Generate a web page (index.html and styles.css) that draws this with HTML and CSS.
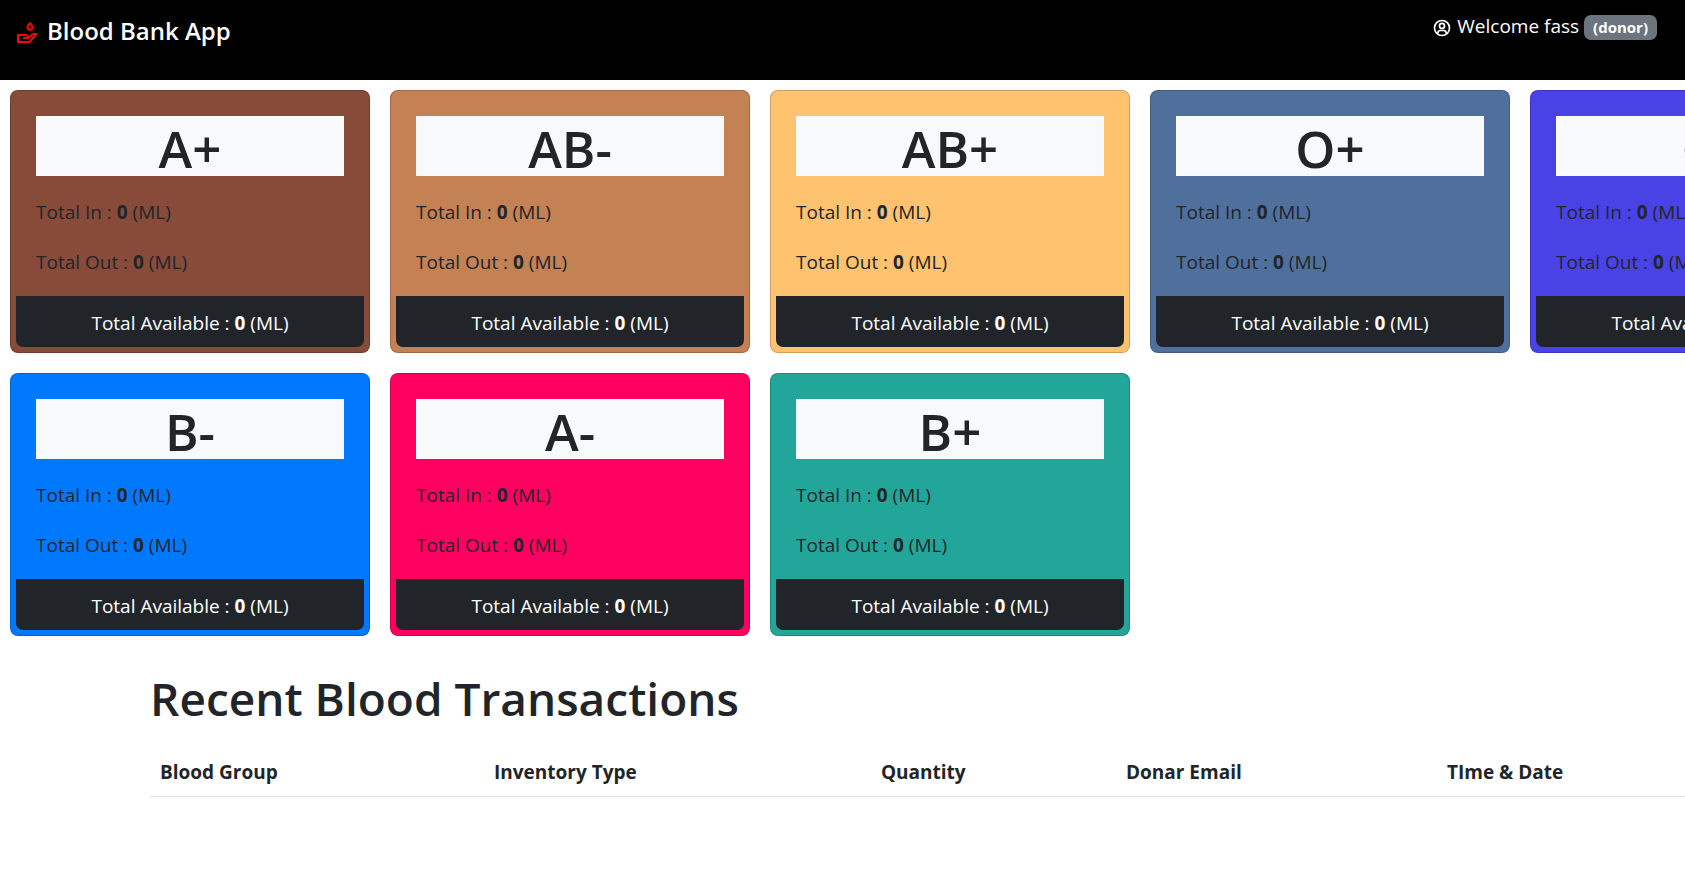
FILE: index.html
```html
<!DOCTYPE html>
<html lang="en">
<head>
<meta charset="utf-8">
<title>Blood Bank App</title>
<link rel="stylesheet" href="styles.css">
</head>
<body>
<header class="navbar">
  <h1 class="brand">
    <svg class="brand-icon" viewBox="0 0 24 24" fill="none" stroke="currentColor" stroke-width="2" stroke-linejoin="round" aria-hidden="true">
      <path d="M15 2c-1 1.500-2.500 2.700-2.500 4.300a2.500 2.500 0 0 0 5 0c0-1.600-1.500-2.800-2.500-4.300z"/>
      <path d="M8 17h5v-.5a2.500 2.500 0 0 0-2.500-2.500H3v7h11.500l6.900-8h-2.600c-.8 0-1.500.3-2.100.9L13 17"/>
    </svg>
    Blood Bank App
  </h1>
  <p class="welcome">
    <svg class="user-icon" viewBox="0 0 24 24" fill="none" stroke="currentColor" stroke-width="2" aria-hidden="true">
      <circle cx="12" cy="12" r="9"/>
      <circle cx="12" cy="9.500" r="3"/>
      <path d="M7 18.500v-.5a3 3 0 0 1 3-3h4a3 3 0 0 1 3 3v.5"/>
    </svg>
    Welcome fass
    <span class="badge">(donor)</span>
  </p>
</header>
<main class="main">
  <section class="cards">
    <article class="card brown">
      <div class="card-body"><h2>A+</h2><p>Total In : <b>0</b> (ML)</p><p>Total Out : <b>0</b> (ML)</p></div>
      <div class="card-footer">Total Available : <b>0</b> (ML)</div>
    </article>
    <article class="card copper">
      <div class="card-body"><h2>AB-</h2><p>Total In : <b>0</b> (ML)</p><p>Total Out : <b>0</b> (ML)</p></div>
      <div class="card-footer">Total Available : <b>0</b> (ML)</div>
    </article>
    <article class="card amber">
      <div class="card-body"><h2>AB+</h2><p>Total In : <b>0</b> (ML)</p><p>Total Out : <b>0</b> (ML)</p></div>
      <div class="card-footer">Total Available : <b>0</b> (ML)</div>
    </article>
    <article class="card steel">
      <div class="card-body"><h2>O+</h2><p>Total In : <b>0</b> (ML)</p><p>Total Out : <b>0</b> (ML)</p></div>
      <div class="card-footer">Total Available : <b>0</b> (ML)</div>
    </article>
    <article class="card indigo">
      <div class="card-body"><h2>O-</h2><p>Total In : <b>0</b> (ML)</p><p>Total Out : <b>0</b> (ML)</p></div>
      <div class="card-footer">Total Available : <b>0</b> (ML)</div>
    </article>
    <article class="card blue">
      <div class="card-body"><h2>B-</h2><p>Total In : <b>0</b> (ML)</p><p>Total Out : <b>0</b> (ML)</p></div>
      <div class="card-footer">Total Available : <b>0</b> (ML)</div>
    </article>
    <article class="card pink">
      <div class="card-body"><h2>A-</h2><p>Total In : <b>0</b> (ML)</p><p>Total Out : <b>0</b> (ML)</p></div>
      <div class="card-footer">Total Available : <b>0</b> (ML)</div>
    </article>
    <article class="card teal">
      <div class="card-body"><h2>B+</h2><p>Total In : <b>0</b> (ML)</p><p>Total Out : <b>0</b> (ML)</p></div>
      <div class="card-footer">Total Available : <b>0</b> (ML)</div>
    </article>
  </section>
  <section class="transactions">
    <h2 id="recent">Recent Blood Transactions</h2>
    <table class="table" aria-labelledby="recent">
      <colgroup><col class="c-group"><col class="c-type"><col class="c-quantity"><col class="c-email"><col class="c-date"></colgroup>
      <thead>
        <tr>
          <th scope="col">Blood Group</th>
          <th scope="col">Inventory Type</th>
          <th scope="col">Quantity</th>
          <th scope="col">Donar Email</th>
          <th scope="col">TIme &amp; Date</th>
        </tr>
      </thead>
      <tbody></tbody>
    </table>
  </section>
</main>
</body>
</html>
```

FILE: styles.css
```css
* {
  box-sizing: border-box;
}

body {
  margin: 0;
  overflow-x: hidden;
  background: #fff;
  color: #212529;
  font: 19px/30px "Segoe UI", "Open Sans", "Noto Sans", sans-serif;
}

h1, h2, p {
  margin: 0;
}

.navbar {
  display: flex;
  justify-content: space-between;
  align-items: flex-start;
  min-height: 80px;
  padding: 11px 28px 11px 15px;
  background: #000;
  color: #fff;
}

.brand {
  display: flex;
  align-items: center;
  gap: 8px;
  font-size: 24px;
  font-weight: 600;
  line-height: 40px;
}

.brand-icon {
  width: 24px;
  height: 24px;
  margin-top: 4px;
  color: #f00;
}

.welcome {
  display: flex;
  align-items: center;
  gap: 5px;
}

.user-icon {
  width: 20px;
  height: 20px;
  margin-top: 4px;
}

.badge {
  margin-top: 2px;
  padding: 0 9px;
  border-radius: 7px;
  background: #6c757d;
  font-size: 15px;
  font-weight: 700;
  line-height: 25px;
}

/* The main area is wider than most windows and runs off the right edge. */
.main {
  min-width: 1920px;
}

.cards {
  display: grid;
  grid-template-columns: repeat(5, 360px);
  gap: 20px;
  padding: 10px;
}

.card {
  padding: 5px;
  border: 1px solid rgba(0, 0, 0, 0.175);
  border-radius: 8px;
}

.card-body {
  padding: 20px 20px 0;
}

.card-body h2 {
  margin-bottom: 20px;
  padding-top: 4px;
  background: #f8f9fa;
  font-size: 51px;
  font-weight: 600;
  line-height: 56px;
  text-align: center;
}

.card-body p {
  margin-bottom: 20px;
  padding-top: 2px;
  line-height: 28px;
}

.card-footer {
  padding: 12px 20px 9px;
  border-radius: 0 0 7px 7px;
  background: #212529;
  color: #fff;
  text-align: center;
}

.brown { background-color: #884a39; }
.copper { background-color: #c38154; }
.amber { background-color: #ffc26f; }
.steel { background-color: #4f709c; }
.indigo { background-color: #4942e4; }
.blue { background-color: #0079ff; }
.pink { background-color: #ff0060; }
.teal { background-color: #22a699; }

.transactions {
  padding: 20px 150px;
}

.transactions h2 {
  margin-bottom: 20px;
  padding-top: 4px;
  font-size: 46px;
  font-weight: 600;
  line-height: 56px;
}

.table {
  width: 100%;
  table-layout: fixed;
  border-collapse: collapse;
}

.table th {
  padding: 11px 10px 9px;
  border-bottom: 1px solid #dee2e6;
  font-weight: 700;
  text-align: left;
}

.c-group { width: 334px; }
.c-type { width: 387px; }
.c-quantity { width: 245px; }
.c-email { width: 321px; }
```
